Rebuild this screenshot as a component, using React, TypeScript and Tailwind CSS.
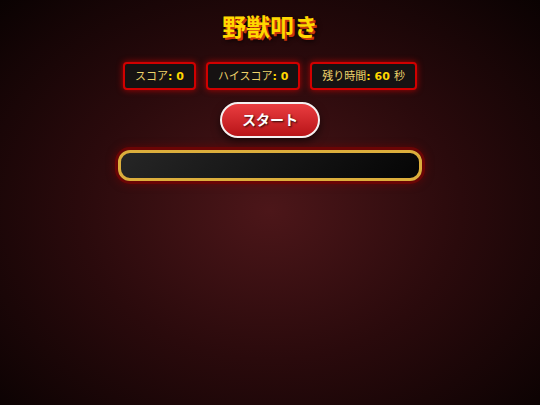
import { FC } from "react";

const ScoreBox: FC<{ label: string; value: string; unit?: string }> = ({ label, value, unit }) => {
    return (
        <div className="h-[28px] px-[10px] flex items-center rounded-[4px] border-2 border-[#d10000] bg-[#161212] shadow-[0_0_6px_rgba(230,0,0,0.7)] text-[11px] leading-none whitespace-nowrap">
            <span className="text-[#eed36a]">{label}</span>
            <span className="font-bold text-[#ffd700]">: {value}</span>
            {unit && <span className="text-[#eed36a] ml-[4px]">{unit}</span>}
        </div>
    )
}

const App: FC = () => {
    return (
        <div
            className="w-[540px] h-[405px] overflow-hidden flex flex-col items-center pt-[12px] bg-[radial-gradient(ellipse_at_50%_52%,#4c1619_0%,#2a0a0c_50%,#0a0202_100%)]"
            style={{ fontFamily: '"DejaVu Sans", "Noto Sans CJK JP", sans-serif' }}
        >
            <h1 className="text-[24px] leading-[32px] font-bold text-[#ffd800] [text-shadow:2px_2px_0_#c8380a,3px_3px_4px_rgba(0,0,0,0.8)]">
                野獣叩き
            </h1>

            <div className="mt-[18px] flex gap-[10px]">
                <ScoreBox label="スコア" value="0" />
                <ScoreBox label="ハイスコア" value="0" />
                <ScoreBox label="残り時間" value="60" unit="秒" />
            </div>

            <button className="mt-[12px] w-[100px] h-[36px] rounded-full border-2 border-[#f4f0f0] bg-[linear-gradient(to_bottom,#ea3d40,#b81418)] shadow-[0_4px_8px_rgba(0,0,0,0.55)] text-white text-[14px] font-bold [text-shadow:1px_1px_2px_rgba(0,0,0,0.8)]">
                スタート
            </button>

            <div className="mt-[12px] w-[304px] h-[31px] rounded-[12px] border-[3px] border-[#dcae3c] bg-[linear-gradient(135deg,#262626,#050505)] shadow-[0_0_0_3px_#6a0505,0_0_8px_3px_rgba(120,0,0,0.6)]" />
        </div>
    )
}

export default App
